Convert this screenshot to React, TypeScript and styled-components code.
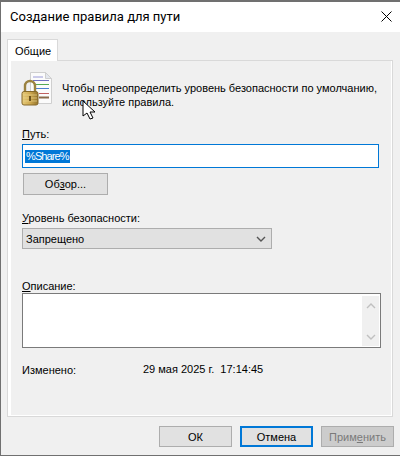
import React from "react";
import styled, { createGlobalStyle } from "styled-components";

const Global = createGlobalStyle`
  html, body { margin: 0; padding: 0; background: #fff; }
  body { font-family: "Liberation Sans", Arial, sans-serif; font-size: 11px; color: #000; }
  * { box-sizing: border-box; }
  u { text-underline-offset: 1px; }
`;

const Win = styled.div`
  position: relative;
  width: 400px;
  height: 456px;
  background: #f0f0f0;
  border-top: 2px solid #707070;
  border-left: 1px solid #707070;
  border-bottom: 1px solid #707070;
  display: flex;
  flex-direction: column;
  overflow: hidden;
`;
const TitleBar = styled.div`
  height: 30px;
  flex: none;
  background: #fff;
  display: flex;
  align-items: center;
  justify-content: space-between;
  padding: 0 8px 2px 9px;
  font-family: Roboto, sans-serif;
  font-size: 13px;
`;
const Tabs = styled.div`
  padding: 7px 0 0 6px;
  height: 28px;
  flex: none;
  display: flex;
`;
const Tab = styled.div`
  width: 51px;
  height: 22px;
  background: #fff;
  border: 1px solid #d9d9d9;
  border-bottom: none;
  padding: 4px 0 0 7px;
  line-height: 14px;
  position: relative;
  z-index: 1;
`;
const Pane = styled.div`
  margin-left: 6px;
  width: 386px;
  height: 357px;
  flex: none;
  border: 1px solid #d9d9d9;
  background: #fff;
  padding: 0 1px 1px 3px;
  display: flex;
`;
const PaneBody = styled.div`
  flex: 1;
  background: #f0f0f0;
  padding: 11px 0 0 11px;
  display: flex;
  flex-direction: column;
`;
const Intro = styled.div`
  display: flex;
  align-items: flex-start;
  height: 55px;
  flex: none;
  margin-left: -1px;
`;
const LockIcon = styled.svg`
  width: 32px;
  height: 34px;
  flex: none;
`;
const IntroText = styled.div`
  margin: 9px 0 0 9px;
  line-height: 14px;
  white-space: nowrap;
`;
const Label = styled.div<{ $top: number }>`
  margin-top: ${(p) => p.$top}px;
  line-height: 14px;
  height: 14px;
  flex: none;
`;
const PathInput = styled.div`
  margin-top: 3px;
  width: 357px;
  height: 24px;
  flex: none;
  background: #fff;
  border: 1px solid #0078d7;
  padding: 0 2px;
  display: flex;
  align-items: center;
`;
const Selected = styled.span`
  background: #0078d7;
  color: #fff;
  line-height: 13px;
  height: 13px;
  padding: 0 1px;
  letter-spacing: -0.9px;
`;
const WinButton = styled.div<{ $w: number; $h: number; $state?: string }>`
  width: ${(p) => p.$w}px;
  height: ${(p) => p.$h}px;
  display: flex;
  align-items: center;
  justify-content: center;
  background: ${(p) => (p.$state === "off" ? "#cccccc" : "#e1e1e1")};
  border: ${(p) => (p.$state === "focus" ? "2px solid #0078d7" : "1px solid #adadad")};
  color: ${(p) => (p.$state === "off" ? "#7a7a7a" : "#000")};
  flex: none;
`;
const BrowseRow = styled.div`
  margin-top: 5px;
  padding-left: 1px;
  flex: none;
`;
const Select = styled.div`
  margin-top: 3px;
  width: 250px;
  height: 21px;
  flex: none;
  background: #e1e1e1;
  border: 1px solid #adadad;
  display: flex;
  align-items: center;
  justify-content: space-between;
  padding: 0 5px 0 3px;
`;
const TextArea = styled.div`
  width: 359px;
  height: 55px;
  flex: none;
  background: #fff;
  border: 1px solid #7a7a7a;
  display: flex;
  justify-content: flex-end;
  padding: 2px 1px 1px 0;
`;
const ScrollBar = styled.div`
  width: 17px;
  background: #f0f0f0;
  display: flex;
  flex-direction: column;
  justify-content: space-between;
  align-items: center;
  padding: 7px 0 6px;
`;
const Meta = styled.div`
  display: flex;
  margin-top: 14px;
  line-height: 15px;
  flex: none;
`;
const MetaKey = styled.div`
  width: 121px;
  margin-top: 1px;
`;
const Footer = styled.div`
  display: flex;
  justify-content: flex-end;
  gap: 8px;
  padding: 9px 6px 0 0;
`;
const Cursor = styled.svg`
  position: absolute;
  left: 81px;
  top: 98px;
  width: 14px;
  height: 20px;
`;

const Lock = () => (
  <LockIcon viewBox="0 0 32 34">
    <defs>
      <linearGradient id="gold" x1="0" y1="0" x2="1" y2="0">
        <stop offset="0" stopColor="#e6cb7a" />
        <stop offset="0.5" stopColor="#cfa94f" />
        <stop offset="1" stopColor="#94742c" />
      </linearGradient>
    </defs>
    <path d="M9.5 .5h15l6 6v25h-21z" fill="#fbfbfb" stroke="#cfcfcf" />
    <path d="M24.5 .5v6h6z" fill="#e3e7ee" stroke="#cfcfcf" />
    <path d="M12 5h10" stroke="#9a9ad8" />
    <path d="M12 8.5h16" stroke="#6f6fc0" />
    <path d="M14 12.5h14" stroke="#54a854" />
    <path d="M14 16.5h14" stroke="#4a7fd0" />
    <path d="M18 21.5h10" stroke="#c06060" />
    <path d="M18 25.5h10" stroke="#8a6a4a" strokeWidth="2" />
    <path d="M4 20v-6a5 5 0 0 1 10 0v6" fill="none" stroke="#9b8240" strokeWidth="2.4" />
    <rect x="1" y="19.5" width="16" height="13.5" rx="2" fill="url(#gold)" stroke="#86692a" />
    <path d="M2 23h14M2 26h14M2 29h14" stroke="#ecd591" strokeOpacity=".7" />
    <rect x="8" y="24" width="2" height="5" fill="#6d5420" />
  </LockIcon>
);

const Chevron = ({ up, color = "#555" }: { up?: boolean; color?: string }) => (
  <svg width="10" height="6" viewBox="0 0 10 6" fill="none">
    <path d={up ? "M1 5l4-4 4 4" : "M1 1l4 4 4-4"} stroke={color} strokeWidth="1.4" />
  </svg>
);

export default function App() {
  return (
    <>
      <Global />
      <Win>
        <TitleBar>
          <span>Создание правила для пути</span>
          <svg width="11" height="11" viewBox="0 0 11 11">
            <path d="M.5.5l10 10M10.5.5l-10 10" stroke="#000" />
          </svg>
        </TitleBar>
        <Tabs>
          <Tab>Общие</Tab>
        </Tabs>
        <Pane>
          <PaneBody>
            <Intro>
              <Lock />
              <IntroText>
                Чтобы переопределить уровень безопасности по умолчанию,
                <br />
                используйте правила.
              </IntroText>
            </Intro>
            <Label $top={0}><u>П</u>уть:</Label>
            <PathInput><Selected>%Share%</Selected></PathInput>
            <BrowseRow><WinButton $w={85} $h={22}>Об<u>з</u>ор...</WinButton></BrowseRow>
            <Label $top={16}><u>У</u>ровень безопасности:</Label>
            <Select>
              <span>Запрещено</span>
              <Chevron />
            </Select>
            <Label $top={30}><u>О</u>писание:</Label>
            <TextArea>
              <ScrollBar>
                <Chevron up color="#c0c0c0" />
                <Chevron color="#c0c0c0" />
              </ScrollBar>
            </TextArea>
            <Meta>
              <MetaKey>Изменено:</MetaKey>
              <div>29 мая 2025 г.&nbsp;&nbsp;17:14:45</div>
            </Meta>
          </PaneBody>
        </Pane>
        <Footer>
          <WinButton $w={73} $h={21}>ОК</WinButton>
          <WinButton $w={73} $h={21} $state="focus">Отмена</WinButton>
          <WinButton $w={73} $h={21} $state="off">Прим<u>е</u>нить</WinButton>
        </Footer>
        <Cursor viewBox="0 0 14 20">
          <path d="M1 1v15l4-3 3 6 3-1-3-6h5z" fill="#fff" stroke="#000" />
        </Cursor>
      </Win>
    </>
  );
}
